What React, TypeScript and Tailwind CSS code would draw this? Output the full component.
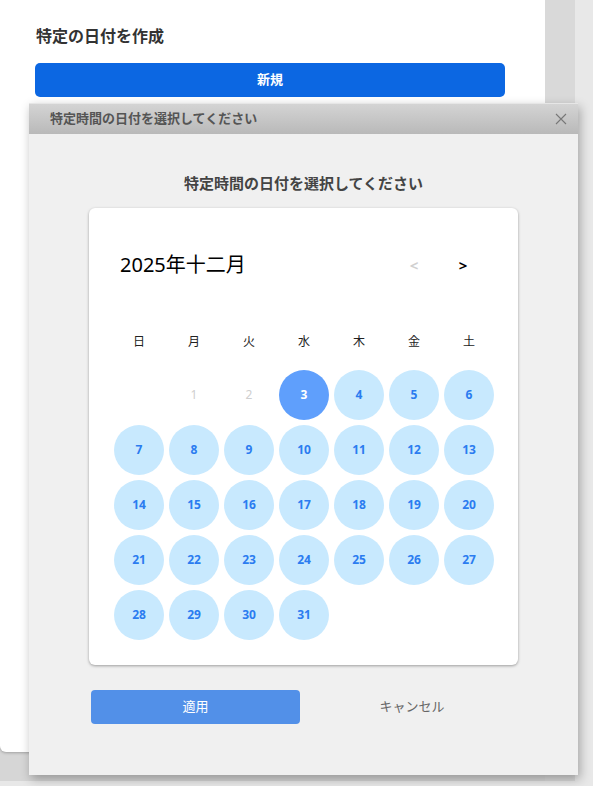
const font = { fontFamily: '"Noto Sans", "Noto Sans CJK JP", sans-serif' };

const weekdays = ['日', '月', '火', '水', '木', '金', '土'];

const DayCell = ({ day }: { day: number | null }) => {
  if (day === null) return <div className="w-[50px] h-[50px]" />;
  if (day < 3)
    return (
      <div className="w-[50px] h-[50px] flex items-center justify-center text-[12px] text-[#cfcfcf]">
        {day}
      </div>
    );
  if (day === 3)
    return (
      <div className="w-[50px] h-[50px] rounded-full bg-[#5f9ffc] flex items-center justify-center text-[12px] font-bold text-white">
        {day}
      </div>
    );
  return (
    <div className="w-[50px] h-[50px] rounded-full bg-[#c8e9fe] flex items-center justify-center text-[12px] font-bold text-[#2b7cf0]">
      {day}
    </div>
  );
};

const App = () => {
  const days: (number | null)[] = [null];
  for (let d = 1; d <= 31; d++) days.push(d);

  return (
    <div className="relative w-[593px] h-[786px] overflow-hidden bg-[#e8e8e8]" style={font}>
      <div className="flex h-[781px] bg-[#d6d6d6]">
        <div className="w-[545px] h-[752px] bg-white rounded-bl-[6px] shadow-[0_1px_3px_rgba(0,0,0,0.25)] pt-[26px] px-[35px]">
          <h1 className="text-[16px] font-bold text-[#333] pl-[1px] leading-[20px]">特定の日付を作成</h1>
          <button className="mt-[17px] w-[470px] h-[34px] rounded-[5px] bg-[#0c67e2] text-white text-[13px] font-bold">
            新規
          </button>
        </div>
        <div className="w-[30px] bg-[#d9d9d9]" />
        <div className="flex-1 bg-[#e8e8e8]" />
      </div>

      {/* dialog */}
      <div className="absolute left-[29px] top-[103px] w-[549px] h-[672px] bg-[#f0f0f0] shadow-[2px_4px_10px_rgba(0,0,0,0.3)] flex flex-col">
        <div className="h-[31px] flex items-center justify-between pl-[21px] pr-[11px] bg-gradient-to-b from-[#d4d4d4] to-[#b9b9b9] border-t border-[#e6e6e6]">
          <span className="text-[13px] font-bold text-[#555]">特定時間の日付を選択してください</span>
          <svg width="12" height="12" viewBox="0 0 12 12" className="text-[#777]">
            <path d="M1 1L11 11M11 1L1 11" stroke="currentColor" strokeWidth="1.1" />
          </svg>
        </div>
        <div className="flex flex-col items-center">
          <h2 className="mt-[38px] text-[15px] font-bold text-[#444] leading-[22px]">
            特定時間の日付を選択してください
          </h2>
          <div className="mt-[14px] w-[429px] bg-white rounded-[6px] shadow-[0_1px_3px_rgba(0,0,0,0.35)] pt-[44px] pb-[25px] pl-[25px] pr-[24px]">
            <div className="flex items-center pl-[6px]">
              <span className="text-[20px] text-black leading-[26px]">2025年十二月</span>
              <span className="ml-auto text-[15px] font-bold text-[#d0d0d0] w-[20px] text-center mr-[29px]">&lt;</span>
              <span className="text-[15px] font-bold text-black w-[20px] text-center mr-[21px]">&gt;</span>
            </div>
            <div className="mt-[55px] grid grid-cols-7 gap-x-[5px]">
              {weekdays.map((w) => (
                <div key={w} className="text-center text-[12px] text-[#222] leading-[18px]">
                  {w}
                </div>
              ))}
            </div>
            <div className="mt-[19px] grid grid-cols-7 gap-[5px]">
              {days.map((d, i) => (
                <DayCell key={i} day={d} />
              ))}
            </div>
          </div>
          <div className="mt-[25px] w-[429px] flex items-center">
            <button className="ml-[2px] w-[209px] h-[34px] rounded-[4px] bg-[#5290e8] text-white text-[13px]">
              適用
            </button>
            <button className="ml-[42px] w-[140px] h-[34px] text-[13px] text-[#666]">キャンセル</button>
          </div>
        </div>
      </div>
    </div>
  );
};

export default App;
